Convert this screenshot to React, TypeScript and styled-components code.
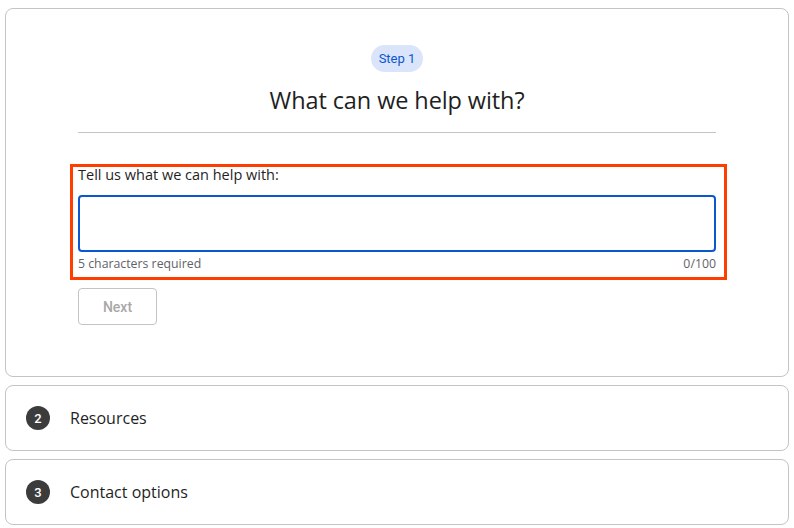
import React from "react";
import styled, { createGlobalStyle } from "styled-components";

const GlobalStyle = createGlobalStyle`
  html, body { margin: 0; padding: 0; background: #ffffff; }
  body { font-family: "Open Sans", Roboto, "Liberation Sans", Arial, sans-serif; color: #1f1f1f; }
  * { box-sizing: border-box; }
`;

const Page = styled.div`
  display: flex;
  flex-direction: column;
  gap: 8px;
  padding: 8px 5px 0 5px;
`;

const Card = styled.section`
  border: 1px solid #c4c4c4;
  border-radius: 8px;
  background: #fff;
`;

const StepCard = styled(Card)`
  padding: 36px 72px 51px 72px;
  display: flex;
  flex-direction: column;
`;

const Pill = styled.div`
  align-self: center;
  height: 27px;
  padding: 0 8px;
  border-radius: 14px;
  background: #dae4fb;
  color: #0b57d0;
  font-family: Roboto, sans-serif;
  font-size: 13px;
  line-height: 27px;
`;

const Title = styled.h1`
  margin: 12px 0 0 0;
  text-align: center;
  font-family: "Open Sans", Roboto, sans-serif;
  font-weight: 400;
  font-size: 23.5px;
  line-height: 32px;
  color: #1f1f1f;
  letter-spacing: -0.1px;
`;

const Divider = styled.hr`
  margin: 16px 0 0 0;
  border: none;
  border-top: 1px solid #c4c4c4;
  height: 0;
`;

const Highlight = styled.div`
  margin: 31px -11px 0 -8px;
  border: 3px solid #ff3d00;
  padding: 0 8px 5px 5px;
  display: flex;
  flex-direction: column;
`;

const Label = styled.label`
  font-family: "Open Sans", sans-serif;
  font-size: 14.5px;
  line-height: 16px;
  color: #1f1f1f;
`;

const Input = styled.div`
  margin-top: 12px;
  height: 57px;
  border: 2px solid #0b57d0;
  border-radius: 4px;
`;

const HelperRow = styled.div`
  margin-top: 4px;
  display: flex;
  justify-content: space-between;
  font-family: "Open Sans", sans-serif;
  font-size: 12.3px;
  line-height: 16px;
  color: #5f6368;
`;

const NextButton = styled.button`
  align-self: flex-start;
  margin-top: 8px;
  width: 79px;
  height: 37px;
  border: 1px solid #c4c4c4;
  border-radius: 4px;
  background: #fff;
  color: #a8a8a8;
  font-family: Roboto, sans-serif;
  font-weight: 500;
  font-size: 14px;
  padding: 0;
`;

const RowCard = styled(Card)`
  height: 66px;
  display: flex;
  align-items: center;
  gap: 20px;
  padding-left: 20px;
`;

const StepNum = styled.span`
  width: 24px;
  height: 24px;
  border-radius: 50%;
  background: #3c3c3c;
  color: #fff;
  display: flex;
  align-items: center;
  justify-content: center;
  font-family: Roboto, sans-serif;
  font-size: 13px;
  font-weight: 500;
`;

const RowTitle = styled.span`
  font-family: "Open Sans", Roboto, sans-serif;
  font-size: 16px;
  color: #1f1f1f;
`;

export default function App() {
  return (
    <>
      <GlobalStyle />
      <Page>
        <StepCard>
          <Pill>Step 1</Pill>
          <Title>What can we help with?</Title>
          <Divider />
          <Highlight>
            <Label>Tell us what we can help with:</Label>
            <Input />
            <HelperRow>
              <span>5 characters required</span>
              <span>0/100</span>
            </HelperRow>
          </Highlight>
          <NextButton>Next</NextButton>
        </StepCard>
        <RowCard>
          <StepNum>2</StepNum>
          <RowTitle>Resources</RowTitle>
        </RowCard>
        <RowCard>
          <StepNum>3</StepNum>
          <RowTitle>Contact options</RowTitle>
        </RowCard>
      </Page>
    </>
  );
}
